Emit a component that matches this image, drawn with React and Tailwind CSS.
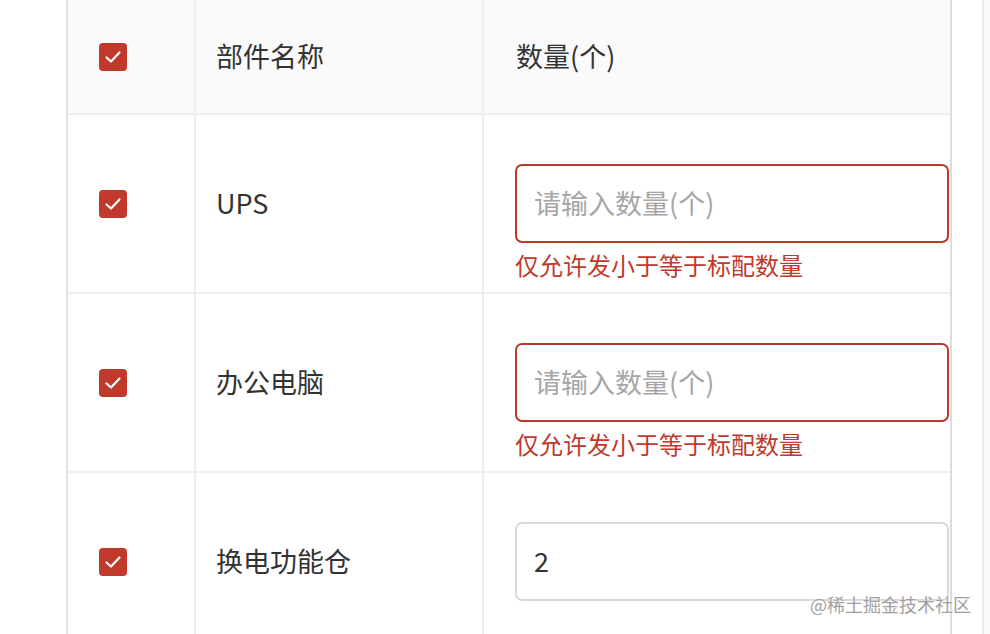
import React from "react";

const font = { fontFamily: '"Noto Sans CJK SC", "Noto Sans", sans-serif' };

function Check() {
  return (
    <div className="w-[28px] h-[28px] rounded-[4px] bg-[#c0392b] flex items-center justify-center">
      <svg width="28" height="28" viewBox="0 0 28 28" fill="none">
        <path d="M7.5 14.5 L12 18.5 L20.5 9.5" stroke="#fff" strokeWidth="2.2" strokeLinecap="round" strokeLinejoin="round" />
      </svg>
    </div>
  );
}

function Row({ name, value, error }) {
  return (
    <div className="flex h-[179px] border-b-2 border-[#eeeeee] shrink-0">
      <div className="w-[128px] border-r-2 border-[#eeeeee] flex items-center pl-[31px]">
        <Check />
      </div>
      <div className="w-[288px] border-r-2 border-[#eeeeee] flex items-center pl-[20px] text-[27px] text-[#333]">
        {name}
      </div>
      <div className="flex-1 flex items-center pl-[31px]">
        <div className="relative">
          <div
            className={
              "w-[434px] h-[79px] rounded-[7px] border-2 flex items-center pl-[17px] text-[27px] " +
              (error ? "border-[#b83a2c] text-[#a6a6a6]" : "border-[#d9d9d9] text-[#333]")
            }
          >
            {value ? value : "请输入数量(个)"}
          </div>
          {error && (
            <div className="absolute left-0 top-[85px] text-[24px] leading-[32px] text-[#bd3b2c] whitespace-nowrap">
              仅允许发小于等于标配数量
            </div>
          )}
        </div>
      </div>
    </div>
  );
}

export default function App() {
  return (
    <div className="w-[990px] h-[634px] overflow-hidden bg-white relative flex" style={font}>
      <div className="w-[66px] shrink-0" />
      <div className="w-[886px] shrink-0 border-l-2 border-r-2 border-l-[#e3e3e3] border-r-[#dcdcdc] flex flex-col">
        <div className="flex h-[115px] bg-[#fafafa] border-b-2 border-[#eeeeee] shrink-0">
          <div className="w-[128px] border-r-2 border-[#f0f0f0] flex items-center pl-[31px]">
            <Check />
          </div>
          <div className="w-[288px] border-r-2 border-[#f0f0f0] flex items-center pl-[20px] text-[27px] text-[#333]">
            部件名称
          </div>
          <div className="flex-1 flex items-center pl-[32px] text-[27px] text-[#333]">数量(个)</div>
        </div>
        <Row name="UPS" error />
        <Row name="办公电脑" error />
        <Row name="换电功能仓" value="2" />
      </div>
      <div className="w-[32px] shrink-0 border-r-2 border-[#ececec]" />
      <div className="flex-1 bg-[#fafafa]" />
      <div className="absolute left-[810px] top-[591px] text-[18px] text-[#a0a0a0] whitespace-nowrap" style={{ textShadow: "0 0 2px #fff" }}>
        @稀土掘金技术社区
      </div>
    </div>
  );
}
